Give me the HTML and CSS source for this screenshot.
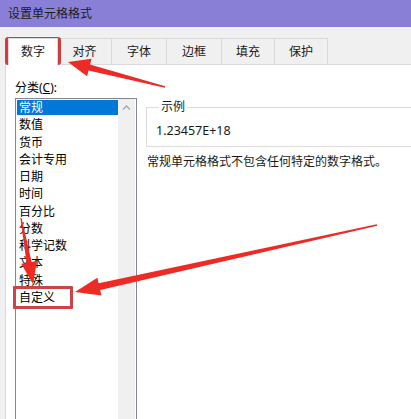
FILE: index.html
```html
<!DOCTYPE html>
<html lang="zh-CN">
<head>
<meta charset="utf-8">
<title>设置单元格格式</title>
<link rel="stylesheet" href="styles.css">
</head>
<body>
<div class="dialog">
  <div class="titlebar">设置单元格格式</div>
  <div class="tabs">
    <div class="tab tab-active tab-w50">数字</div>
    <div class="tab tab-w54">对齐</div>
    <div class="tab tab-w55">字体</div>
    <div class="tab tab-w55">边框</div>
    <div class="tab tab-w53">填充</div>
    <div class="tab tab-w53">保护</div>
  </div>
  <div class="panel">
    <div class="left-col">
      <div class="label">分类(<u>C</u>):</div>
      <div class="listbox">
        <div class="items">
          <div class="item item-selected">常规</div>
          <div class="item">数值</div>
          <div class="item">货币</div>
          <div class="item">会计专用</div>
          <div class="item">日期</div>
          <div class="item">时间</div>
          <div class="item">百分比</div>
          <div class="item">分数</div>
          <div class="item">科学记数</div>
          <div class="item">文本</div>
          <div class="item">特殊</div>
          <div class="item">自定义</div>
        </div>
        <div class="scrollbar">
          <div class="scroll-btn">
            <svg width="17" height="17" viewBox="0 0 17 17"><path d="M5 10.5 L8.5 7 L12 10.5" fill="none" stroke="#a6a6a6" stroke-width="1.3"/></svg>
          </div>
        </div>
      </div>
    </div>
    <div class="right-col">
      <fieldset class="sample">
        <legend class="sample-legend">示例</legend>
        <div class="sample-value">1.23457E+18</div>
      </fieldset>
      <div class="desc">常规单元格格式不包含任何特定的数字格式。</div>
    </div>
  </div>
</div>

<div class="mark mark-tab"></div>
<div class="mark mark-item"></div>
<svg class="arrows" width="411" height="419" viewBox="0 0 411 419">
  <polygon fill="#ee2a24" points="68,62 91.5,58.8 90,64.6 165.2,86.3 164.8,87.7 88.5,70.4 87.1,76.2"/>
  <polygon fill="#ee2a24" points="33,284 37,261 31.6,262 21.6,217.9 20.4,218.1 26.6,262.9 21.2,263.8"/>
  <polygon fill="#ee2a24" points="75,292 97.4,277.8 98.6,283.2 376.8,224.2 377.2,225.8 100.2,290 101.4,295.4"/>
</svg>
</body>
</html>
```

FILE: styles.css
```css
html, body {
  margin: 0;
  padding: 0;
}
body {
  width: 411px;
  height: 419px;
  overflow: hidden;
  position: relative;
  background: #f0f0f0;
  font-family: "Noto Sans", "Noto Sans CJK SC", sans-serif;
  font-size: 12px;
  color: #000;
}
.dialog {
  width: 411px;
  height: 419px;
  display: flex;
  flex-direction: column;
}
.titlebar {
  height: 27px;
  line-height: 27px;
  background: #8a7fd6;
  color: #1c1c1c;
  padding-left: 8px;
  font-size: 12px;
}
.tabs {
  display: flex;
  margin-top: 11px;
  padding-left: 8px;
  height: 26px;
}
.tab {
  box-sizing: border-box;
  height: 26px;
  line-height: 25px;
  text-align: center;
  background: #f0f0f0;
  border: 1px solid #d9d9d9;
  border-bottom: none;
  border-left: none;
  color: #1a1a1a;
}
.tab-active {
  background: #fff;
  border-left: 1px solid #d9d9d9;
  height: 27px;
  position: relative;
  z-index: 1;
}
.tab-w50 { width: 50px; }
.tab-w54 { width: 54px; }
.tab-w55 { width: 55px; }
.tab-w53 { width: 53px; }
.panel {
  flex: 1;
  min-height: 0;
  margin-left: 5px;
  background: #fff;
  border-top: 1px solid #d9d9d9;
  border-left: 1px solid #d9d9d9;
  padding: 15px 0 0 9px;
  display: flex;
  gap: 9px;
}
.left-col {
  width: 122px;
  display: flex;
  flex-direction: column;
}
.label {
  height: 16px;
  line-height: 16px;
  margin-bottom: 2px;
}
.label u {
  text-decoration: underline;
}
.listbox {
  flex: 1;
  border: 1px solid #828790;
  border-bottom: none;
  display: flex;
}
.items {
  flex: 1;
  padding-left: 1px;
}
.item {
  box-sizing: border-box;
  height: 17.27px;
  padding: 1px 0;
  line-height: 15.27px;
  text-indent: 2px;
  white-space: nowrap;
}
.item-selected {
  background: #0078d7;
  background-clip: content-box;
  color: #fff;
}
.scrollbar {
  width: 17px;
  margin-right: 1px;
  background: #f0f0f0;
}
.scroll-btn {
  height: 17px;
}
.scroll-btn svg {
  display: block;
}
.right-col {
  flex: 1;
  min-width: 0;
  display: flex;
  flex-direction: column;
}
.sample {
  margin: 19px 0 0 0;
  padding: 0 0 7px 9px;
  border: 1px solid #dcdcdc;
  border-right: none;
  min-width: 0;
}
.sample-legend {
  padding: 0 2px;
  margin-left: 3px;
  line-height: 16px;
  color: #1a1a1a;
}
.sample-value {
  padding-top: 8px;
  line-height: 16px;
  font-size: 12.5px;
  color: #1a1a1a;
}
.desc {
  margin: 7px 0 0 1px;
  line-height: 16px;
  color: #1a1a1a;
  white-space: nowrap;
}
.mark {
  position: absolute;
  box-sizing: border-box;
  border: 3px solid #d23c3c;
  border-radius: 3px;
}
.mark-tab {
  left: 5px;
  top: 37px;
  width: 56px;
  height: 28px;
}
.mark-item {
  left: 13px;
  top: 286px;
  width: 60px;
  height: 23px;
  border-radius: 1px;
  border-color: #cc4444;
}
.arrows {
  position: absolute;
  left: 0;
  top: 0;
}
```
